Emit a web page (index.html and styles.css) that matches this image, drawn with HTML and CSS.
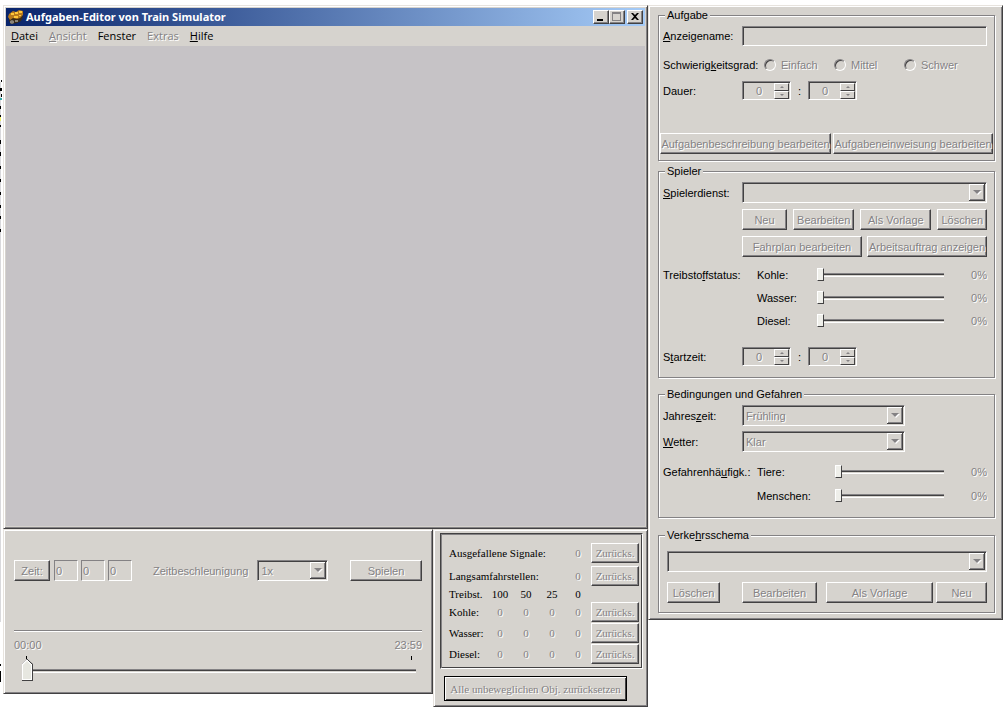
FILE: index.html
```html
<!DOCTYPE html>
<html lang="de">
<head>
<meta charset="utf-8">
<title>Aufgaben-Editor von Train Simulator</title>
<link rel="stylesheet" href="styles.css">
</head>
<body>
<div class="desktop">
  <svg class="edge" viewBox="0 0 3 709" aria-hidden="true">
    <path d="M0 82h1v540H0z" fill="#d9d9dc"/>
    <path d="M1 80h1v2h-1zM0 88h2v3H0zM1 94h1v3H1zM0 106h1v3H0zM0 115h1v3H0zM0 125h1v2H0zM0 140h1v4H0zM0 152h1v4H0zM0 166h1v3H0zM0 179h1v3H0zM0 192h1v3H0zM0 205h1v3H0zM0 216h1v3H0zM0 229h1v3H0zM0 664h1v2H0zM0 671h1v11H0z" fill="#000"/>
    <path d="M0 98h2v2H0z" fill="#3aa"/><path d="M0 117h1v4H0z" fill="#ee6"/>
  </svg>
  <main class="editor">
    <section class="window">
      <header class="titlebar">
        <svg class="app-icon" viewBox="0 0 16 16" aria-hidden="true">
          <path d="M1 8l3-4 9 1 2 3-2 4-4 2-6 1-2-3z" fill="#3a2c18"/>
          <path d="M1 5l4-3 3 1 3-2 4 1v4l-3 3-3 1-4-1-3 2-2-3z" fill="#b87a1c"/>
          <path d="M3 4h3v2H3zM7 3h3v2H7zM11 2h3v2h-3zM6 7h4v2H6zM11 6h2v1h-2z" fill="#ffc83a"/>
          <path d="M2 12l2-1 2 1v2l-2 1-2-1zM7 11h3v2H7z" fill="#8a8478"/>
        </svg>
        <h1>Aufgaben-Editor von Train Simulator</h1>
        <button class="winbtn" aria-label="Minimieren"><svg viewBox="0 0 12 10"><path d="M2 7h6v2H2z"/></svg></button>
        <button class="winbtn" aria-label="Maximieren" disabled><svg viewBox="0 0 12 10"><path d="M1 0h9v9H1zM2 2v6h7V2z" fill="#848284" fill-rule="evenodd"/></svg></button>
        <button class="winbtn close" aria-label="Schließen"><svg viewBox="0 0 12 10"><path d="M2 1h2l2 2 2-2h2L7 4.500 10 8H8L6 6 4 8H2l3-3.500z"/></svg></button>
      </header>
      <nav class="menu">
        <button><u>D</u>atei</button>
        <button disabled><u>A</u>nsicht</button>
        <button>Fenster</button>
        <button disabled>Extras</button>
        <button><u>H</u>ilfe</button>
      </nav>
      <div class="workspace"></div>
    </section>
    <div class="bottom">
      <section class="panel time">
        <div class="time-row">
          <button class="btn zeit" disabled>Zeit:</button>
          <div class="hms">
            <input value="0" aria-label="Stunden" disabled>
            <input value="0" aria-label="Minuten" disabled>
            <input value="0" aria-label="Sekunden" disabled>
          </div>
          <label class="off accel" for="accel">Zeitbeschleunigung</label>
          <select id="accel" class="combo" disabled><option>1x</option></select>
          <button class="btn play" disabled>Spielen</button>
        </div>
        <div class="range-labels off"><span>00:00</span><span>23:59</span></div>
        <div class="ticks"><i></i><i></i></div>
        <input class="timeline" type="range" value="0" aria-label="Uhrzeit" disabled>
      </section>
      <section class="panel failures">
        <div class="sunken">
          <table>
            <colgroup><col class="c-name"><col class="c-n"><col class="c-n"><col class="c-n"><col class="c-n"><col></colgroup>
            <tr class="tall"><th colspan="4">Ausgefallene Signale:</th><td>0</td><td><button class="btn" disabled>Zurücks.</button></td></tr>
            <tr class="tall"><th colspan="4">Langsamfahrstellen:</th><td>0</td><td><button class="btn" disabled>Zurücks.</button></td></tr>
            <tr class="head"><th>Treibst.</th><th>100</th><th>50</th><th>25</th><th>0</th><td></td></tr>
            <tr><th>Kohle:</th><td>0</td><td>0</td><td>0</td><td>0</td><td><button class="btn" disabled>Zurücks.</button></td></tr>
            <tr><th>Wasser:</th><td>0</td><td>0</td><td>0</td><td>0</td><td><button class="btn" disabled>Zurücks.</button></td></tr>
            <tr><th>Diesel:</th><td>0</td><td>0</td><td>0</td><td>0</td><td><button class="btn" disabled>Zurücks.</button></td></tr>
          </table>
        </div>
        <button class="btn reset-all" disabled>Alle unbeweglichen Obj. zurücksetzen</button>
      </section>
    </div>
  </main>

  <aside class="panel props">
    <fieldset class="task">
      <legend>Aufgabe</legend>
      <div class="row"><label class="key" for="name"><u>A</u>nzeigename:</label><input id="name" class="text" disabled></div>
      <div class="row radios">
        <span class="key wide">Schwierig<u>k</u>eitsgrad:</span>
        <label class="off"><input type="radio" name="lvl" disabled>Einfach</label>
        <label class="off"><input type="radio" name="lvl" disabled>Mittel</label>
        <label class="off"><input type="radio" name="lvl" disabled>Schwer</label>
      </div>
      <div class="row">
        <span class="key">Dauer:</span>
        <div class="spin"><input value="0" aria-label="Dauer Stunden" disabled><button class="up" aria-label="mehr" disabled></button><button class="down" aria-label="weniger" disabled></button></div>
        <span class="colon">:</span>
        <div class="spin"><input value="0" aria-label="Dauer Minuten" disabled><button class="up" aria-label="mehr" disabled></button><button class="down" aria-label="weniger" disabled></button></div>
      </div>
      <div class="task-actions"><button class="btn" disabled>Aufgabenbeschreibung bearbeiten</button><button class="btn" disabled>Aufgabeneinweisung bearbeiten</button></div>
    </fieldset>

    <fieldset class="player">
      <legend>Spieler</legend>
      <div class="row"><label class="key" for="duty"><u>S</u>pielerdienst:</label><select id="duty" class="combo" disabled></select></div>
      <div class="row indent four"><button class="btn" disabled>Neu</button><button class="btn" disabled>Bearbeiten</button><button class="btn" disabled>Als Vorlage</button><button class="btn" disabled>Löschen</button></div>
      <div class="row indent two"><button class="btn" disabled>Fahrplan bearbeiten</button><button class="btn" disabled>Arbeitsauftrag anzeigen</button></div>
      <div class="sliders">
        <div class="row"><span class="key">Treibsto<u>f</u>fstatus:</span><label for="coal">Kohle:</label><input id="coal" type="range" value="0" disabled><output class="off">0%</output></div>
        <div class="row"><span class="key"></span><label for="water">Wasser:</label><input id="water" type="range" value="0" disabled><output class="off">0%</output></div>
        <div class="row"><span class="key"></span><label for="diesel">Diesel:</label><input id="diesel" type="range" value="0" disabled><output class="off">0%</output></div>
      </div>
      <div class="row start">
        <span class="key">S<u>t</u>artzeit:</span>
        <div class="spin"><input value="0" aria-label="Startzeit Stunden" disabled><button class="up" aria-label="mehr" disabled></button><button class="down" aria-label="weniger" disabled></button></div>
        <span class="colon">:</span>
        <div class="spin"><input value="0" aria-label="Startzeit Minuten" disabled><button class="up" aria-label="mehr" disabled></button><button class="down" aria-label="weniger" disabled></button></div>
      </div>
    </fieldset>

    <fieldset class="hazards">
      <legend>Bedingungen und Gefahren</legend>
      <div class="row"><label class="key" for="season">Jahres<u>z</u>eit:</label><select id="season" class="combo short" disabled><option>Frühling</option></select></div>
      <div class="row"><label class="key" for="weather"><u>W</u>etter:</label><select id="weather" class="combo short" disabled><option>Klar</option></select></div>
      <div class="sliders narrow">
        <div class="row"><span class="key">Gefahrenhä<u>u</u>figk.:</span><label for="animals">Tiere:</label><input id="animals" type="range" value="0" disabled><output class="off">0%</output></div>
        <div class="row"><span class="key"></span><label for="people">Menschen:</label><input id="people" type="range" value="0" disabled><output class="off">0%</output></div>
      </div>
    </fieldset>

    <fieldset class="traffic">
      <legend>Verke<u>h</u>rsschema</legend>
      <div class="row"><select class="combo" aria-label="Verkehrsschema" disabled></select></div>
      <div class="row actions"><button class="btn" disabled>Löschen</button><button class="btn" disabled>Bearbeiten</button><button class="btn" disabled>Als Vorlage</button><button class="btn" disabled>Neu</button></div>
    </fieldset>
  </aside>
</div>
</body>
</html>
```
FILE: styles.css
```css
:root {
  --face: #d6d3ce;
  --shade: #848284;
  --dark: #424142;
  --light: #fff;
}
* { box-sizing: border-box; }
body {
  margin: 0;
  background: #fff;
  color: #000;
  font: 11px/14px "Liberation Sans", Arial, sans-serif;
}
button, input, select { font: inherit; color: inherit; margin: 0; }
.desktop { display: flex; align-items: flex-start; }
.edge { flex: none; width: 3px; }
.off, :disabled { color: var(--shade); text-shadow: 1px 1px 0 var(--light); }

.panel, .window {
  background: var(--face);
  border: 1px solid;
  border-color: #e7e3de var(--dark) var(--dark) #e7e3de;
  box-shadow: inset 1px 1px 0 var(--light), inset -1px -1px 0 var(--shade);
}
.editor { flex: 1; min-width: 0; margin-top: 5px; }

/* main window */
.window { padding: 2px; }
.titlebar {
  display: flex;
  align-items: center;
  height: 18px;
  padding: 0 2px;
  background: linear-gradient(90deg, #08246b, #a5cbf7);
  color: #fff;
}
.app-icon { width: 16px; height: 16px; margin-right: 2px; }
.titlebar h1 {
  flex: 1;
  margin: 0;
  font: bold 11px/18px "Noto Sans", sans-serif;
}
.winbtn {
  width: 16px;
  height: 14px;
  padding: 0;
  display: grid;
  place-items: center;
  background: var(--face);
  border: 1px solid;
  border-color: var(--light) var(--dark) var(--dark) var(--light);
  box-shadow: inset -1px -1px 0 var(--shade);
}
.winbtn svg { width: 12px; height: 10px; }
.winbtn.close { margin-left: 2px; }
.menu {
  display: flex;
  gap: 11px;
  height: 20px;
  padding: 0 5px;
  font: 11px/20px "Open Sans", sans-serif;
}
.menu button { padding: 0; border: 0; background: none; }
.workspace { height: 480px; background: #c6c3c6; }

.btn {
  height: 21px;
  padding: 0;
  white-space: nowrap;
  background: var(--face);
  border: 1px solid;
  border-color: var(--light) var(--dark) var(--dark) var(--light);
  box-shadow: inset -1px -1px 0 var(--shade);
}
.text, .combo, .spin {
  background: var(--face);
  border: 1px solid;
  border-color: var(--shade) var(--light) var(--light) var(--shade);
  box-shadow: inset 1px 1px 0 var(--dark);
  border-radius: 0;
}
.combo {
  appearance: none;
  height: 21px;
  min-width: 0;
  padding: 0 20px 0 3px;
  opacity: 1;
  background: url("data:image/svg+xml,%3Csvg xmlns='http://www.w3.org/2000/svg' width='16' height='17'%3E%3Cpath fill='%23424142' d='M0 0h16v17H0z'/%3E%3Cpath fill='%23fff' d='M0 0h15v16H0z'/%3E%3Cpath fill='%23848284' d='M1 1h14v15H1z'/%3E%3Cpath fill='%23d6d3ce' d='M1 1h13v14H1z'/%3E%3Cpath fill='%23fff' d='M5 7h8l-4 4z'/%3E%3Cpath fill='%23848284' d='M4 6h8l-4 4z'/%3E%3C/svg%3E") right 1px top 1px no-repeat var(--face);
}

/* time panel */
.bottom { display: flex; align-items: flex-start; }
.time { flex: 1; min-width: 0; height: 165px; padding: 30px 10px 0; }
.time-row {
  display: flex;
  align-items: center;
  padding-bottom: 49px;
  border-bottom: 1px solid var(--shade);
  box-shadow: 0 1px 0 var(--light);
}
.zeit { width: 36px; margin-right: 4px; }
.hms { display: flex; gap: 3px; }
.hms input {
  width: 24px;
  height: 21px;
  padding: 0 1px;
  background: none;
  border: 1px solid;
  border-color: var(--shade) var(--light) var(--light) var(--shade);
}
.accel { margin: 0 9px 0 21px; }
#accel { width: 71px; }
.play { width: 72px; margin-left: auto; }
.range-labels { display: flex; justify-content: space-between; padding-top: 7px; }
.ticks { display: flex; justify-content: space-between; padding: 4px 10px 0 12px; }
.ticks i { width: 1px; height: 4px; background: #000; }
input[type=range] {
  appearance: none;
  flex: 1;
  min-width: 0;
  height: 14px;
  background: none;
}
input[type=range]::-webkit-slider-runnable-track {
  height: 4px;
  background: linear-gradient(var(--shade) 1px, var(--dark) 1px 2px, var(--face) 2px 3px, var(--light) 3px);
}
input[type=range]::-webkit-slider-thumb {
  appearance: none;
  width: 7px;
  height: 13px;
  margin-top: -5px;
  background: #efefea;
  border: 1px solid;
  border-color: var(--light) var(--dark) var(--dark) var(--light);
}
.time .timeline { display: block; width: 394px; max-width: 100%; height: 22px; margin-left: 8px; }
.time .timeline::-webkit-slider-thumb {
  width: 12px;
  height: 22px;
  margin-top: -10px;
  border: 0;
  background: url("data:image/svg+xml,%3Csvg xmlns='http://www.w3.org/2000/svg' width='12' height='22'%3E%3Cpath fill='%23424142' d='M0 22V5l5-5 6 5v17z'/%3E%3Cpath fill='%23fff' d='M0 21V5l5-5 5 5v16z'/%3E%3Cpath fill='%23e7e7e0' d='M1 20V6l4-4 4 4v14z'/%3E%3Cpath fill='none' stroke='%23424142' d='M5 0l5.500 5.500V21.500H0'/%3E%3C/svg%3E");
}

/* failures panel */
.failures {
  width: 215px;
  height: 178px;
  padding: 3px 4px 0 6px;
  font: 11px/14px "Liberation Serif", "Times New Roman", serif;
}
.sunken {
  padding: 7px 3px 4px 8px;
  border: 1px solid;
  border-color: var(--dark) var(--light) var(--light) var(--dark);
  box-shadow: inset 1px 1px 0 var(--shade), inset -1px -1px 0 var(--dark);
}
table { width: 100%; border-collapse: collapse; table-layout: fixed; }
.c-name { width: 38px; }
.c-n { width: 26px; }
tr { height: 21px; }
tr.tall { height: 23px; }
tr.head { height: 14px; }
th, td { padding: 0; font-weight: normal; text-align: center; }
th:first-child { text-align: left; white-space: nowrap; }
td { color: var(--shade); text-shadow: 1px 1px 0 var(--light); }
td .btn { display: block; width: 48px; height: 20px; margin-left: auto; }
.reset-all {
  display: block;
  width: 183px;
  height: 25px;
  margin: 7px 0 0 4px;
  border-color: #000;
  box-shadow: inset 1px 1px 0 var(--light), inset -1px -1px 0 var(--dark);
}

/* property panel */
.props { flex: none; width: 355px; margin: 5px 2px 0 0; padding: 2px 7px 6px 9px; }
fieldset {
  margin: 0;
  min-width: 0;
  padding: 4px 1px 0;
  border: 1px solid var(--shade);
  box-shadow: 1px 1px 0 var(--light), inset 1px 1px 0 var(--light);
}
legend { margin-left: 5px; padding: 0 2px; background: var(--face); }
.row { display: flex; align-items: center; padding: 0 6px 0 3px; }
.key { flex: none; width: 79px; white-space: nowrap; }
.key.wide { width: 101px; }
.text { flex: 1; min-width: 0; height: 20px; }
.row .combo { flex: 1; }
.row .combo.short { flex: none; width: 163px; }
.radios { height: 18px; margin: 10px 0 7px; }
.radios label { display: flex; align-items: center; gap: 5px; width: 70px; }
input[type=radio] {
  appearance: none;
  width: 12px;
  height: 12px;
  border: 1px solid;
  border-color: var(--shade) var(--light) var(--light) var(--shade);
  border-radius: 50%;
  box-shadow: inset 1px 1px 0 var(--dark);
}
.spin {
  display: grid;
  grid-template: 8px 8px / 1fr 15px;
  width: 49px;
  height: 19px;
  padding: 1px 1px 0;
}
.spin input {
  grid-row: 1 / 3;
  width: 100%;
  height: 16px;
  padding: 0;
  border: 0;
  background: none;
  text-align: center;
}
.spin button {
  display: grid;
  place-items: center;
  padding: 0;
  background: var(--face);
  border: 1px solid;
  border-color: var(--light) var(--dark) var(--dark) var(--light);
}
.spin button::after { content: ""; border: 2px solid transparent; }
.spin .up::after { border-top: 0; border-bottom-color: var(--shade); }
.spin .down::after { border-bottom: 0; border-top-color: var(--shade); }
.colon { width: 17px; text-align: center; }
.task-actions { display: grid; grid-template-columns: 171fr 160fr; gap: 2px; margin-top: 33px; }
.task { padding-bottom: 6px; }

.player { margin-top: 3px; padding-bottom: 11px; }
.indent { margin: 6px 0 0 79px; justify-content: space-between; }
.four .btn { padding: 0 3px; }
.four .btn:first-child { width: 45px; }
.four .btn:nth-child(3) { width: 71px; }
.two { gap: 5px; }
.two .btn { flex: 1; }
.sliders { margin-top: 6px; }
.sliders .row { height: 23px; }
.sliders .key { width: 94px; }
.sliders label { width: 60px; }
.sliders output { width: 43px; text-align: right; }
.start { margin-top: 15px; }

.hazards { margin-top: 9px; padding-bottom: 9px; }
.hazards > .row + .row { margin-top: 5px; }
.narrow { margin-top: 8px; }
.narrow .row { height: 24px; }
.narrow label { width: 78px; }

.traffic { margin-top: 10px; padding: 9px 1px 9px 5px; }
.traffic legend { margin-left: 1px; }
.actions { margin-top: 10px; }
.actions .btn:nth-child(1) { width: 53px; }
.actions .btn:nth-child(2) { width: 75px; margin: 0 9px 0 22px; }
.actions .btn:nth-child(3) { flex: 1; margin-right: 3px; }
.actions .btn:nth-child(4) { width: 51px; }
```
